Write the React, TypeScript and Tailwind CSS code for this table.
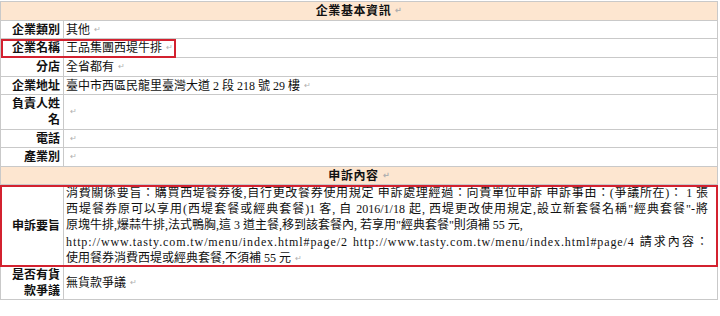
const Mark = () => <span className="ml-[4px] align-middle text-[8px] leading-none text-[#b0b0b0]">↵</span>;

const Url = ({ children }: { children: string }) => <span className="tracking-[0.9px]">{children}</span>;

type RowProps = {
  label: React.ReactNode;
  children?: React.ReactNode;
  h: string;
  boxed?: string;
};

const Row = ({ label, children, h, boxed }: RowProps) => (
  <div className={`relative flex border-b border-[#c9c9c9] ${h}`}>
    <div className="flex w-[63px] shrink-0 items-center justify-end border-r border-[#c9c9c9] pr-[3px] text-right font-bold leading-[16px]">
      <div>{label}</div>
    </div>
    <div className="flex flex-1 items-center pl-[2px]">{children}</div>
    {boxed && <div className={`pointer-events-none absolute border-2 border-[#d3212f] ${boxed}`} />}
  </div>
);

const Header = ({ title, h }: { title: string; h: string }) => (
  <div className={`flex items-center justify-center border-b border-[#c9c9c9] bg-[#fde6d0] font-bold ${h}`}>
    <span className="tracking-[0.6px]">{title}</span>
    <Mark />
  </div>
);

export default function App() {
  return (
    <div className="h-[316px] w-[720px] overflow-hidden bg-white pt-[1px] font-['Liberation_Serif','Noto_Sans_CJK_TC',serif] text-[12px] text-[#111]">
      <div className="ml-0 w-[718px] border-x border-t border-[#c9c9c9]">
        <Header title="企業基本資訊" h="h-[19px]" />
        <Row label="企業類別" h="h-[18px]">
          其他<Mark />
        </Row>
        <Row label="企業名稱" h="h-[19px]" boxed="left-0 top-0 h-[19px] w-[175px]">
          王品集團西堤牛排<Mark />
        </Row>
        <Row label="分店" h="h-[19px]">
          全省都有<Mark />
        </Row>
        <Row label="企業地址" h="h-[18px]">
          臺中市西區民龍里臺灣大道 2 段 218 號 29 樓<Mark />
        </Row>
        <Row
          label={
            <>
              負責人姓
              <br />名
            </>
          }
          h="h-[35px]"
        >
          <span className="-mt-[2px]"><Mark /></span>
        </Row>
        <Row label="電話" h="h-[18px]">
          <Mark />
        </Row>
        <Row label="產業別" h="h-[19px]">
          <Mark />
        </Row>
        <Header title="申訴內容" h="h-[18px]" />
        <Row label="申訴要旨" h="h-[82px]" boxed="-left-[1px] top-0 h-[82px] w-[718px]">
          <div className="w-[642px] leading-[16.2px]">
            <div className="text-justify [text-align-last:justify]">
              消費關係要旨：購買西堤餐券後,自行更改餐券使用規定 申訴處理經過：向貴單位申訴 申訴事由：(爭議所在)： 1 張
            </div>
            <div className="text-justify [text-align-last:justify]">
              西堤餐券原可以享用(西堤套餐或經典套餐)1 客, 自 2016/1/18 起, 西堤更改使用規定,設立新套餐名稱"經典套餐"-將
            </div>
            <div>原塊牛排,爆蒜牛排,法式鴨胸,這 3 道主餐,移到該套餐內, 若享用"經典套餐"則須補 55 元,</div>
            <div className="text-justify [text-align-last:justify]">
              <Url>http://www.tasty.com.tw/menu/index.html#page/2</Url> <Url>http://www.tasty.com.tw/menu/index.html#page/4</Url> 請求內容：
            </div>
            <div>
              使用餐券消費西堤或經典套餐,不須補 55 元<Mark />
            </div>
          </div>
        </Row>
        <Row
          label={
            <>
              是否有貨
              <br />
              款爭議
            </>
          }
          h="h-[33px]"
        >
          無貨款爭議<Mark />
        </Row>
      </div>
    </div>
  );
}
